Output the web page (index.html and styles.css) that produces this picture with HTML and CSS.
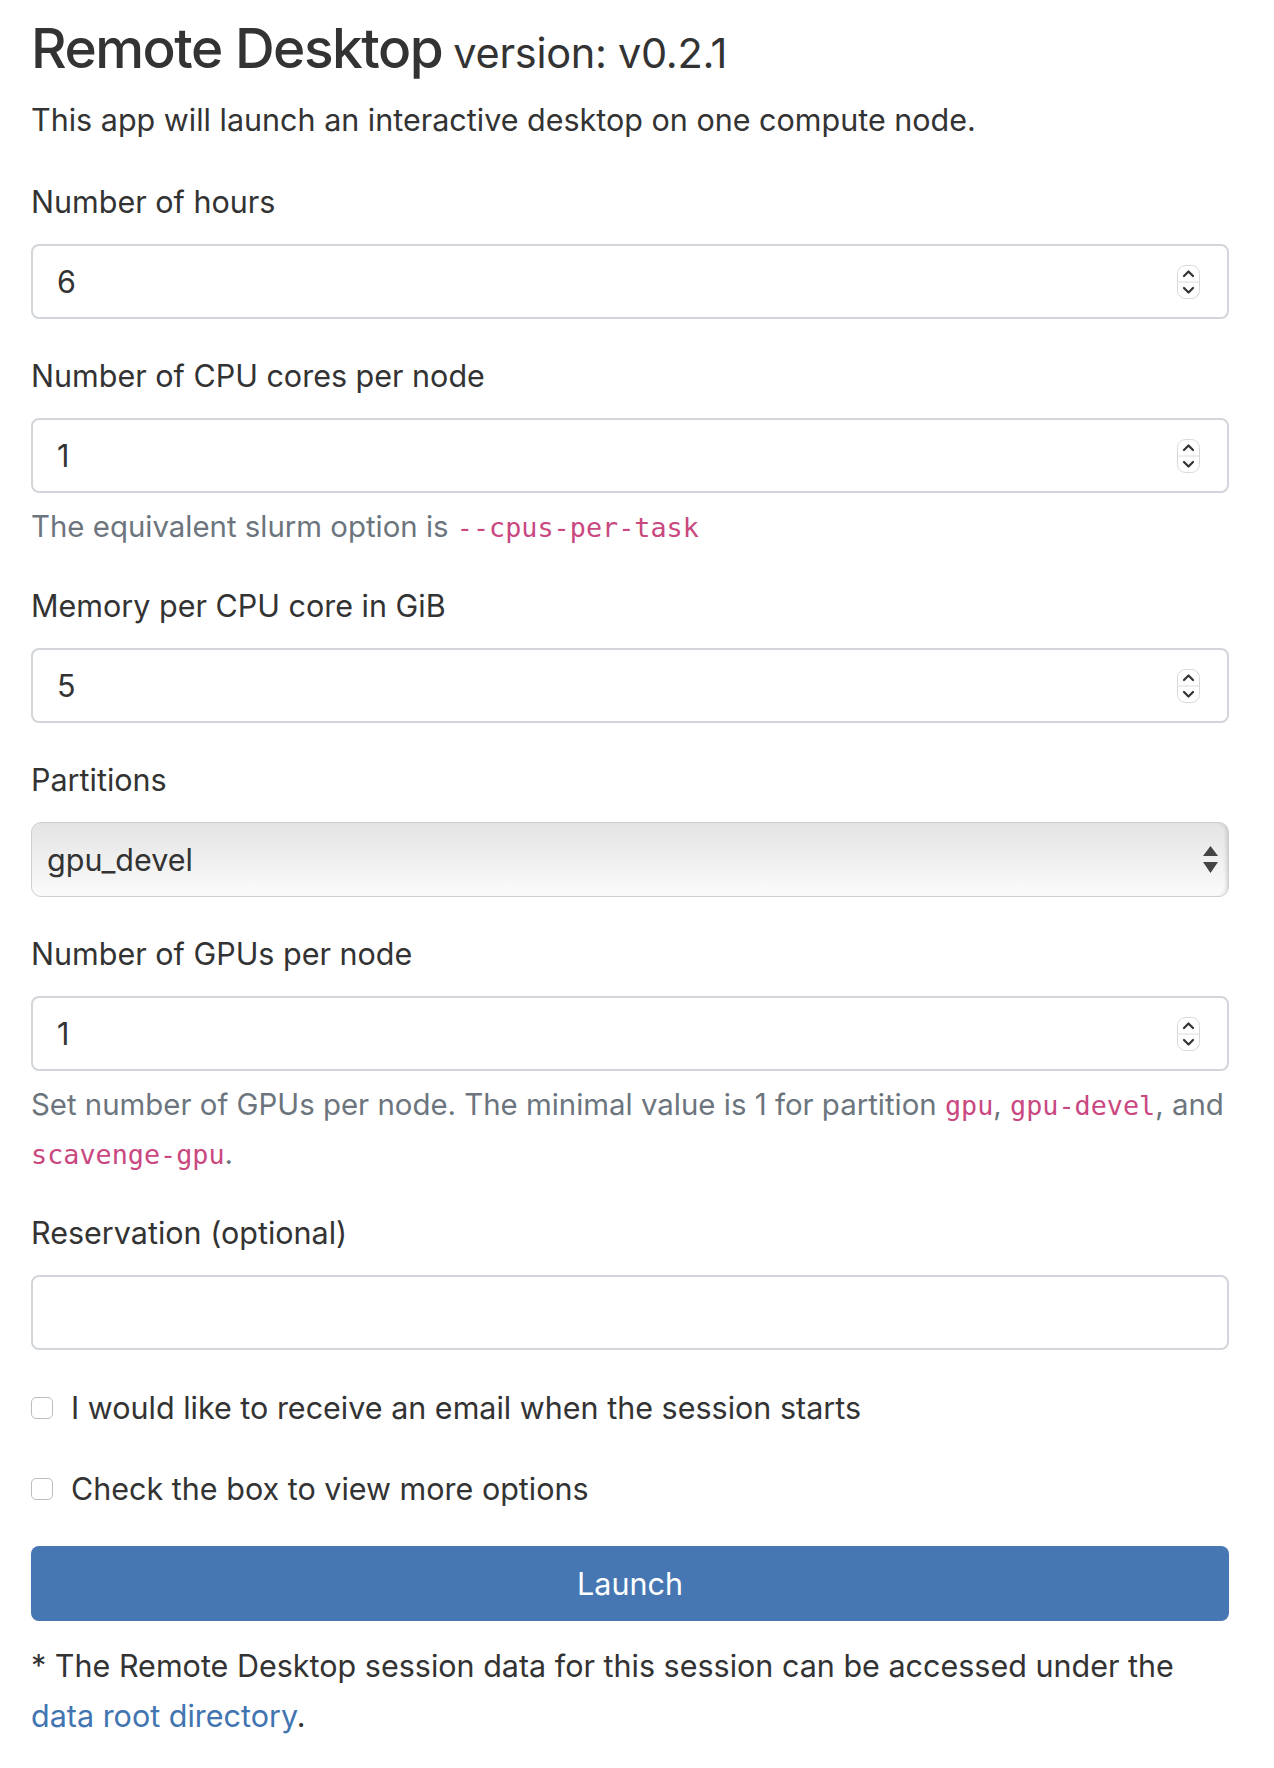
FILE: index.html
```html
<!DOCTYPE html>
<html lang="en">
<head>
<meta charset="utf-8">
<title>Remote Desktop</title>
<link rel="stylesheet" href="styles.css">
</head>
<body>
<main class="page">
  <h3 class="title">Remote Desktop <small class="version">version: v0.2.1</small></h3>
  <p class="desc">This app will launch an interactive desktop on one compute node.</p>

  <div class="group">
    <label class="label">Number of hours</label>
    <div class="control number"><span class="value">6</span><svg class="spin" width="23" height="34" viewBox="0 0 23 34"><rect x="0.5" y="0.5" width="22" height="33" rx="8" fill="#fff" stroke="#d9d9d9"/><line x1="1" y1="17" x2="22" y2="17" stroke="#dcdcdc"/><polyline points="7,11 11.5,6.5 16,11" fill="none" stroke="#333" stroke-width="2.2" stroke-linecap="round" stroke-linejoin="round"/><polyline points="7,23 11.5,27.5 16,23" fill="none" stroke="#333" stroke-width="2.2" stroke-linecap="round" stroke-linejoin="round"/></svg></div>
  </div>

  <div class="group group-help">
    <label class="label">Number of CPU cores per node</label>
    <div class="control number"><span class="value">1</span><svg class="spin" width="23" height="34" viewBox="0 0 23 34"><rect x="0.5" y="0.5" width="22" height="33" rx="8" fill="#fff" stroke="#d9d9d9"/><line x1="1" y1="17" x2="22" y2="17" stroke="#dcdcdc"/><polyline points="7,11 11.5,6.5 16,11" fill="none" stroke="#333" stroke-width="2.2" stroke-linecap="round" stroke-linejoin="round"/><polyline points="7,23 11.5,27.5 16,23" fill="none" stroke="#333" stroke-width="2.2" stroke-linecap="round" stroke-linejoin="round"/></svg></div>
    <p class="help">The equivalent slurm option is <code>--cpus-per-task</code></p>
  </div>

  <div class="group">
    <label class="label">Memory per CPU core in GiB</label>
    <div class="control number"><span class="value">5</span><svg class="spin" width="23" height="34" viewBox="0 0 23 34"><rect x="0.5" y="0.5" width="22" height="33" rx="8" fill="#fff" stroke="#d9d9d9"/><line x1="1" y1="17" x2="22" y2="17" stroke="#dcdcdc"/><polyline points="7,11 11.5,6.5 16,11" fill="none" stroke="#333" stroke-width="2.2" stroke-linecap="round" stroke-linejoin="round"/><polyline points="7,23 11.5,27.5 16,23" fill="none" stroke="#333" stroke-width="2.2" stroke-linecap="round" stroke-linejoin="round"/></svg></div>
  </div>

  <div class="group">
    <label class="label">Partitions</label>
    <div class="control select"><span class="value">gpu_devel</span><svg class="arrows" width="15" height="27" viewBox="0 0 15 27"><polygon points="7.5,0 15,10 0,10" fill="#444"/><polygon points="0,16 15,16 7.5,27" fill="#444"/></svg></div>
  </div>

  <div class="group group-help">
    <label class="label">Number of GPUs per node</label>
    <div class="control number"><span class="value">1</span><svg class="spin" width="23" height="34" viewBox="0 0 23 34"><rect x="0.5" y="0.5" width="22" height="33" rx="8" fill="#fff" stroke="#d9d9d9"/><line x1="1" y1="17" x2="22" y2="17" stroke="#dcdcdc"/><polyline points="7,11 11.5,6.5 16,11" fill="none" stroke="#333" stroke-width="2.2" stroke-linecap="round" stroke-linejoin="round"/><polyline points="7,23 11.5,27.5 16,23" fill="none" stroke="#333" stroke-width="2.2" stroke-linecap="round" stroke-linejoin="round"/></svg></div>
    <p class="help">Set number of GPUs per node. The minimal value is 1 for partition <code>gpu</code>, <code>gpu-devel</code>, and <code>scavenge-gpu</code>.</p>
  </div>

  <div class="group">
    <label class="label">Reservation (optional)</label>
    <div class="control text"></div>
  </div>

  <div class="check-row"><span class="checkbox"></span><span class="check-label">I would like to receive an email when the session starts</span></div>
  <div class="check-row"><span class="checkbox"></span><span class="check-label">Check the box to view more options</span></div>

  <div class="btn">Launch</div>

  <p class="note">* The Remote Desktop session data for this session can be accessed under the <a class="link" href="#">data root directory</a>.</p>
</main>
</body>
</html>
```

FILE: styles.css
```css
html, body {
  margin: 0;
  padding: 0;
  background: #fff;
}

body {
  font-family: Inter, "Liberation Sans", Arial, sans-serif;
  font-size: 30.5px;
  line-height: 48px;
  color: #333;
}

.page {
  width: 1198px;
  margin-left: 31px;
  padding-top: 15px;
  padding-bottom: 20px;
}

.title {
  margin: 0;
  font-size: 55px;
  line-height: 66px;
  font-weight: 500;
  letter-spacing: -1.5px;
}

.version {
  font-size: 41.5px;
  font-weight: 400;
  letter-spacing: -0.3px;
  margin-left: -2px;
}

.desc {
  margin: 10px 0 34px;
}

.group {
  margin-bottom: 33px;
}

.group-help {
  margin-bottom: 30px;
}

.label {
  display: block;
  margin-bottom: 18px;
}

.control {
  box-sizing: border-box;
  height: 75px;
  border: 2px solid #d2d5d9;
  border-radius: 8px;
  display: flex;
  align-items: center;
  background: #fff;
}

.number {
  padding-left: 24px;
  padding-right: 27px;
}

.number .value {
  color: #333;
}

.spin {
  margin-left: auto;
  display: block;
}

.select {
  padding-left: 15px;
  padding-right: 10px;
  border: 1px solid #cfcfcf;
  border-radius: 10px;
  background: linear-gradient(#e4e4e4, #fbfbfb);
  box-shadow: inset -4px 0 4px -3px rgba(0, 0, 0, 0.18);
}

.select .value {
  color: #333;
}

.arrows {
  margin-left: auto;
  display: block;
}

.help {
  margin: 10px 0 0;
  font-size: 29.4px;
  color: #6c757d;
}

code {
  font-family: "DejaVu Sans Mono", "Liberation Mono", monospace;
  font-size: 26.8px;
  color: #c9487f;
}

.check-row {
  display: flex;
  align-items: center;
  margin-top: 34px;
  margin-bottom: 33px;
}

.check-row + .check-row {
  margin-top: 0;
}

.checkbox {
  box-sizing: border-box;
  width: 22px;
  height: 22px;
  border: 1.5px solid #bdbdbd;
  border-radius: 5px;
  background: #fff;
  margin-right: 18px;
  flex: none;
}

.btn {
  margin-top: 33px;
  box-sizing: border-box;
  height: 75px;
  border-radius: 8px;
  background: #4677b3;
  color: #fff;
  display: flex;
  align-items: center;
  justify-content: center;
}

.note {
  margin: 20px 0 0;
  line-height: 50px;
}

.link {
  color: #4174b0;
  text-decoration: none;
  white-space: nowrap;
}
```
